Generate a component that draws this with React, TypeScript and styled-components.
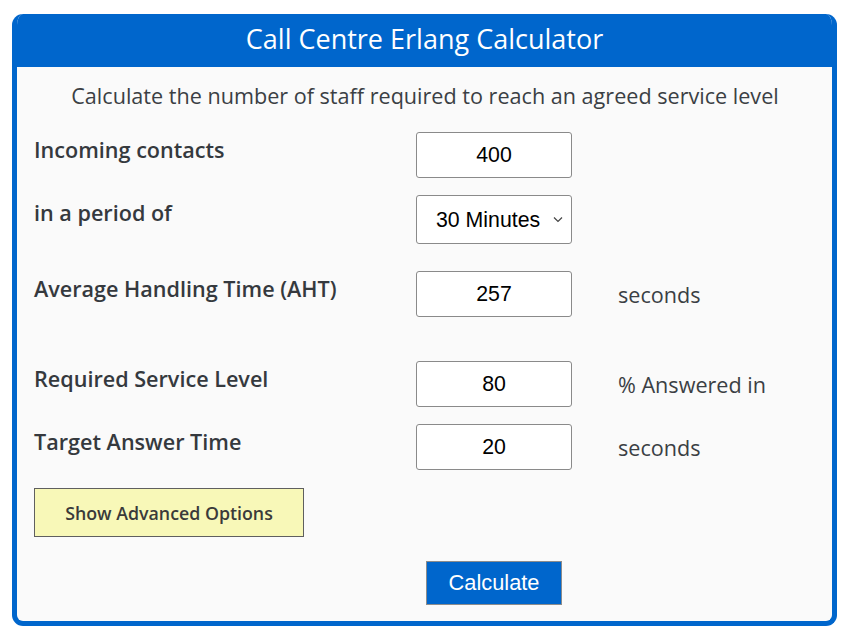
import React from 'react';
import styled, { createGlobalStyle } from 'styled-components';

const GlobalStyle = createGlobalStyle`
  html, body {
    margin: 0;
    padding: 0;
    background: #ffffff;
  }
  body {
    font-family: "Open Sans", "Liberation Sans", Arial, sans-serif;
  }
`;

const Page = styled.div`
  padding: 14px 13px 10px 12px;
`;

const Panel = styled.div`
  width: 825px;
  border: 5px solid #0066cc;
  border-top: none;
  border-radius: 11px;
  overflow: hidden;
  background: #fafafa;
  box-sizing: border-box;
`;

const Header = styled.h1`
  margin: 0;
  height: 53px;
  background: #0066cc;
  color: #ffffff;
  font-size: 27px;
  font-weight: 400;
  line-height: 50px;
  text-align: center;
`;

const Body = styled.div`
  padding: 14px 0 16px 17px;
`;

const Intro = styled.p`
  margin: 0 0 0 -16px;
  text-align: center;
  color: #3b3f44;
  font-size: 21.6px;
  line-height: 30px;
`;

// label | field | unit
const Row = styled.div<{ $gap: number }>`
  display: grid;
  grid-template-columns: 382px 156px auto;
  align-items: start;
  margin-top: ${(p) => p.$gap}px;
`;

const Label = styled.label`
  padding-top: 3px;
  color: #35393e;
  font-size: 21.6px;
  font-weight: 600;
  line-height: 29px;
  white-space: nowrap;
`;

const Field = styled.input`
  box-sizing: border-box;
  width: 156px;
  height: 46px;
  border: 1px solid #8a8a8a;
  border-radius: 3px;
  background: #ffffff;
  color: #000000;
  font-family: "Liberation Sans", Arial, sans-serif;
  font-size: 21.3px;
  text-align: center;
  padding: 0;
  outline: none;
`;

const SelectWrap = styled.div`
  position: relative;
  width: 156px;
  height: 49px;
`;

const Select = styled.select`
  appearance: none;
  -webkit-appearance: none;
  box-sizing: border-box;
  width: 156px;
  height: 49px;
  border: 1px solid #8a8a8a;
  border-radius: 3px;
  background: #ffffff;
  color: #000000;
  font-family: "Liberation Sans", Arial, sans-serif;
  font-size: 21.3px;
  padding: 0 0 0 19px;
  outline: none;
`;

const Chevron = styled.svg`
  position: absolute;
  right: 9px;
  top: 21px;
  pointer-events: none;
`;

const Unit = styled.span`
  align-self: center;
  padding-left: 46px;
  color: #3b3f44;
  font-size: 21.6px;
  line-height: 29px;
  white-space: nowrap;
`;

const AdvancedButton = styled.button`
  display: block;
  margin-top: 18px;
  width: 270px;
  height: 49px;
  border: 1px solid #5f5f5f;
  border-radius: 0;
  background: #f8f8b8;
  color: #3a3a3a;
  font-family: "Open Sans", "Liberation Sans", Arial, sans-serif;
  font-size: 17.8px;
  font-weight: 600;
  cursor: pointer;
`;

const ButtonSlot = styled.div`
  display: flex;
  justify-content: center;
`;

const CalcButton = styled.button`
  width: 136px;
  height: 44px;
  border: 1px solid #8c8c8c;
  background: #0066cc;
  color: #ffffff;
  font-family: "Liberation Sans", Arial, sans-serif;
  font-size: 21.8px;
  padding: 0;
  cursor: pointer;
`;

export default function App() {
  return (
    <Page>
      <GlobalStyle />
      <Panel>
        <Header>Call Centre Erlang Calculator</Header>
        <Body>
          <Intro>Calculate the number of staff required to reach an agreed service level</Intro>

          <Row $gap={21}>
            <Label>Incoming contacts</Label>
            <Field defaultValue="400" />
          </Row>

          <Row $gap={17}>
            <Label>in a period of</Label>
            <SelectWrap>
              <Select defaultValue="30">
                <option value="15">15 Minutes</option>
                <option value="30">30 Minutes</option>
                <option value="60">60 Minutes</option>
              </Select>
              <Chevron width="10" height="7" viewBox="0 0 10 7">
                <path d="M1 1.5 L5 5.5 L9 1.5" fill="none" stroke="#444" strokeWidth="1.2" />
              </Chevron>
            </SelectWrap>
          </Row>

          <Row $gap={27}>
            <Label>Average Handling Time (AHT)</Label>
            <Field defaultValue="257" />
            <Unit>seconds</Unit>
          </Row>

          <Row $gap={44}>
            <Label>Required Service Level</Label>
            <Field defaultValue="80" />
            <Unit>% Answered in</Unit>
          </Row>

          <Row $gap={17}>
            <Label>Target Answer Time</Label>
            <Field defaultValue="20" />
            <Unit>seconds</Unit>
          </Row>

          <AdvancedButton type="button">Show Advanced Options</AdvancedButton>

          <Row $gap={24}>
            <span />
            <ButtonSlot>
              <CalcButton type="button">Calculate</CalcButton>
            </ButtonSlot>
          </Row>
        </Body>
      </Panel>
    </Page>
  );
}
